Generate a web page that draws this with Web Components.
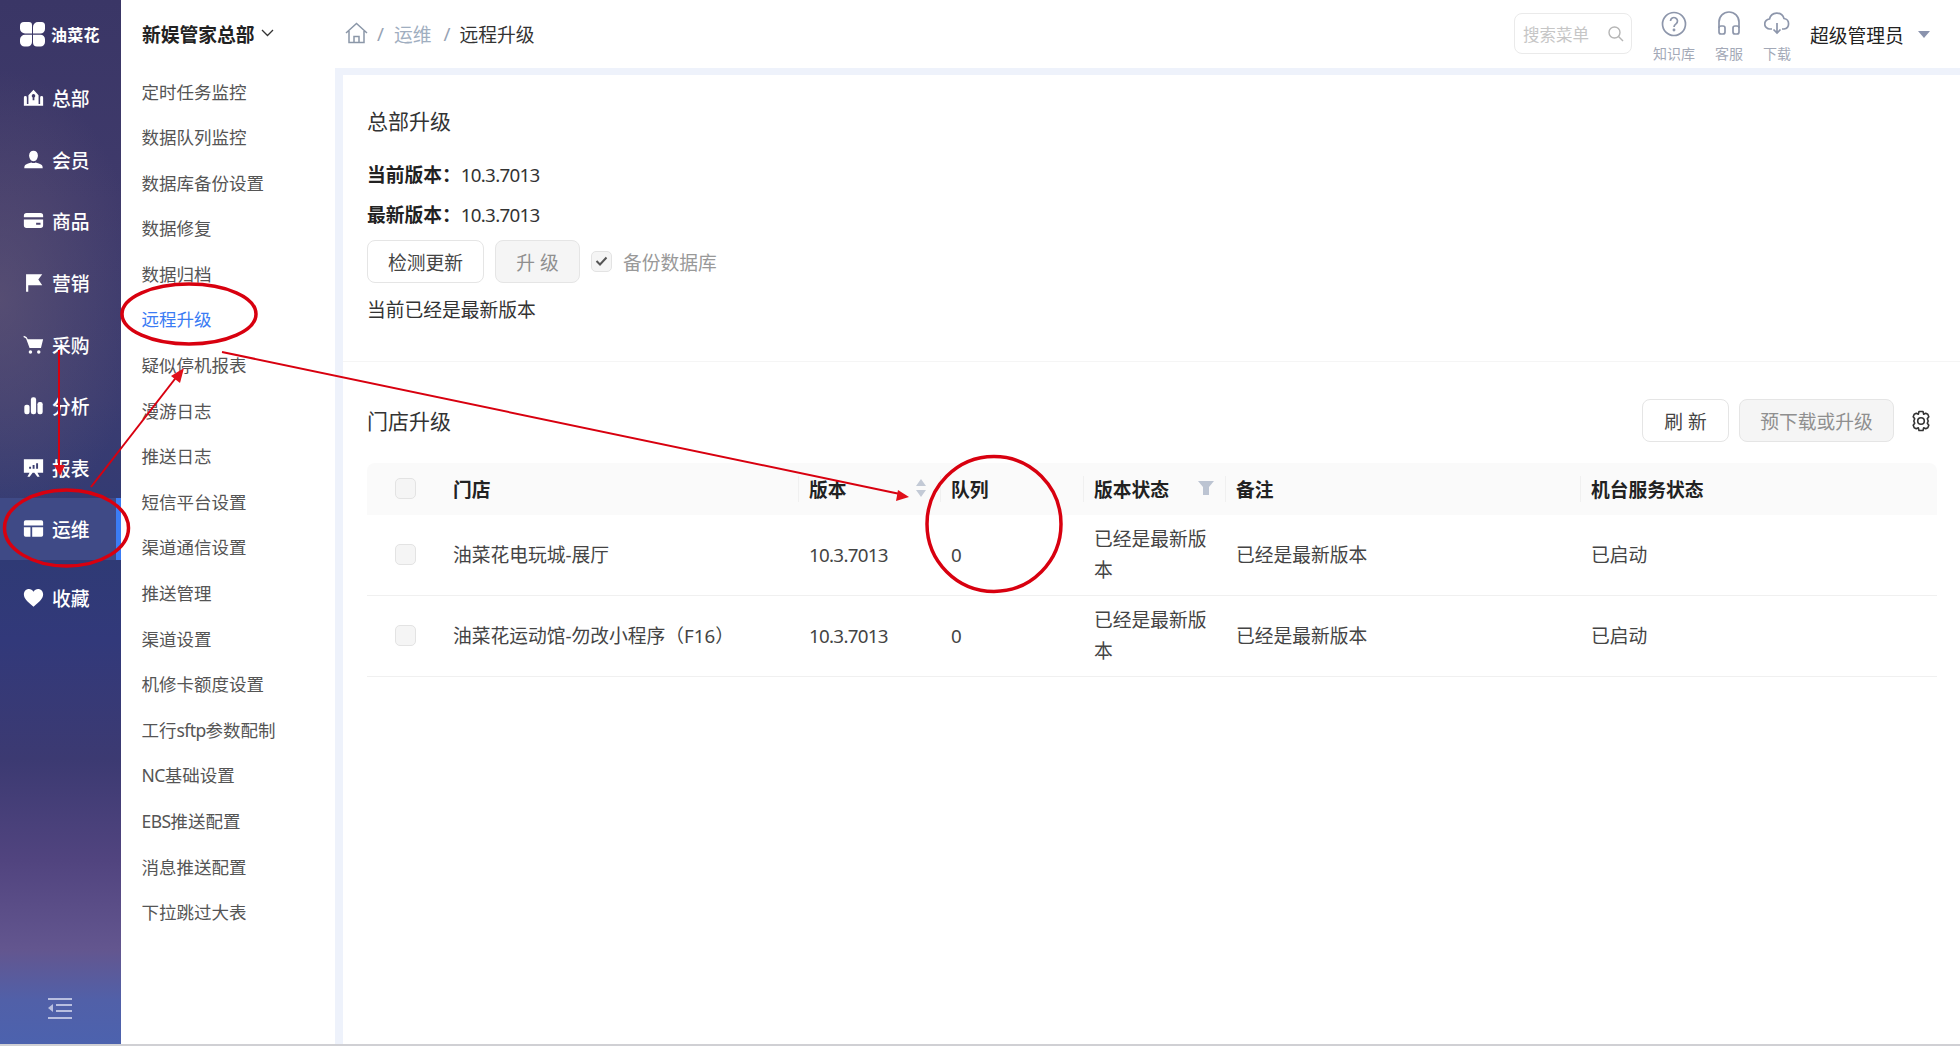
<!DOCTYPE html>
<html lang="zh">
<head>
<meta charset="utf-8">
<title>远程升级</title>
<style>
  html, body { margin: 0; height: 100%; }
  body {
    font-family: "Noto Sans", "Noto Sans CJK SC", sans-serif;
    color: #333;
    overflow: hidden;
  }
  app-shell { height: 1046px; }
</style>
</head>
<body>
<app-shell>
  <main-nav slot="nav"></main-nav>
  <sub-nav slot="sub"></sub-nav>
  <top-bar slot="top"></top-bar>
  <hq-upgrade slot="content"></hq-upgrade>
  <store-upgrade slot="content"></store-upgrade>
  <red-marks slot="marks"></red-marks>
</app-shell>

<script>
function tpl(html) {
  const t = document.createElement("template");
  t.innerHTML = html;
  return t;
}

class Base extends HTMLElement {
  constructor() {
    super();
    this.attachShadow({ mode: "open" });
    this.shadowRoot.appendChild(this.constructor.template.content.cloneNode(true));
  }
}

const NAV_ICONS = {
  总部: `<path fill-rule="evenodd" d="M1 21.500V12a1.700 1.700 0 0 1 3.400 0v7.500h1.800V9.500L12 3l5.800 6.500v10h1.800V12a1.700 1.700 0 0 1 3.400 0v9.500zM12 8a2 2 0 1 0 .01 0zM11 12v3h2v-3z"/>`,
  会员: `<path d="M12 2c3 0 5 2.200 5 5.500S15 14 12 14 7 10.800 7 7.500 9 2 12 2z"/><path d="M1.500 22c0-1.300.1-2.700 1-3.600C4 17 7.500 16 9.500 15.500c1.500.8 3.500.8 5 0 2 .5 5.500 1.500 7 2.900.9.900 1 2.300 1 3.600z"/>`,
  商品: `<path fill-rule="evenodd" d="M4 3.500h16a3 3 0 0 1 3 3v1.800H1V6.500a3 3 0 0 1 3-3zM1 10.800h22v6.700a3 3 0 0 1-3 3H4a3 3 0 0 1-3-3zM15 14.500v2.400h5v-2.400z"/>`,
  营销: `<path d="M3.500 2.500H22l-4.500 6 4.500 6.500H6v7.500H3.500z"/>`,
  采购: `<path d="M1 2l3 1.500L5.500 6H23l-2.500 10H7.500L3.500 5 .5 3.500z"/><circle cx="8.500" cy="20.500" r="2"/><circle cx="18" cy="20.500" r="2"/>`,
  分析: `<rect x="1.500" y="11" width="6" height="11" rx="2.500"/><rect x="9" y="2.500" width="6" height="19.500" rx="2.500"/><rect x="16.500" y="8" width="6" height="14" rx="2.500"/>`,
  报表: `<path fill-rule="evenodd" d="M1 2.500h22v15.500h-6.500l2.500 4.500h-2.600L13 18h-2l-3.400 4.500H5L7.500 18H1zM7 11v2.500h2.200V11zM11 9v4.500h2.200V9zM15 7v6.500h2.200V7z"/>`,
  运维: `<path d="M3 2.500h18A2 2 0 0 1 23 4.500V8.500H1V4.500A2 2 0 0 1 3 2.500zM1 10.500h7.500v11H3a2 2 0 0 1-2-2zM10.500 10.500H23v9a2 2 0 0 1-2 2H10.500z"/>`,
  收藏: `<path d="M12 22.500C4.500 16.500 1 13 1 8.300 1 4.800 3.600 2.300 6.800 2.300c2.100 0 4 1.100 5.200 3 1.200-1.900 3.100-3 5.200-3C20.400 2.300 23 4.800 23 8.300c0 4.700-3.500 8.200-11 14.200z"/>`
};

class MainNav extends Base {
  static template = tpl(`
  <style>
    :host {
      display: flex;
      flex-direction: column;
      width: 121px;
      height: 100%;
      color: #fff;
      background:
        radial-gradient(ellipse 140px 230px at 0 300px, rgba(110,95,120,.5), transparent),
        linear-gradient(180deg, #3a3666 0, #3f3a6b 200px, #3b3c70 400px, #2f3a75 560px, #32397a 640px,
          #3c3a72 760px, #51447f 860px, #63568f 950px, #5160a8 1000px, #4c62ae 1044px);
    }
    .logo { display: flex; align-items: center; height: 67px; box-sizing: border-box; padding-left: 20px; gap: 6px; flex: none; }
    .logo b { font-size: 16px; font-weight: 700; letter-spacing: .3px; white-space: nowrap; }
    .item {
      display: flex; align-items: center; height: 61.600px; box-sizing: border-box;
      padding-left: 23px; gap: 8px; font-size: 18.750px; font-weight: 500; flex: none;
    }
    .item svg { width: 21px; height: 21px; fill: #fff; flex: none; }
    .item.on { background: #3f4a86; border-right: 5px solid #3b7cf4; }
    .fav { margin-top: 7px; }
    .fold { margin-top: auto; margin-bottom: 25px; padding-left: 48px; height: 21px; }
    .fold svg { display: block; }
  </style>
  <div class="logo">
    <svg width="25" height="26" viewBox="0 0 25 26" fill="#fff">
      <path d="M4 1h5a3 3 0 0 1 3 3v8.500H5a5 5 0 0 1-5-5V5a4 4 0 0 1 4-4z"/>
      <path d="M18 1h3.500A3.500 3.500 0 0 1 25 4.500V8a4.500 4.500 0 0 1-4.500 4.500H13V6a5 5 0 0 1 5-5z"/>
      <path d="M5 13.800h7V21a4.500 4.500 0 0 1-4.500 4.500H4.500A4.500 4.500 0 0 1 0 21v-2.200a5 5 0 0 1 5-5z"/>
      <path d="M13 13.800h7.500a4.500 4.500 0 0 1 4.500 4.500v2.700a4.500 4.500 0 0 1-4.500 4.500H17a4 4 0 0 1-4-4z"/>
    </svg>
    <b>油菜花</b>
  </div>
  <nav id="list" style="display:contents"></nav>
  <div class="fold">
    <svg width="24" height="21" viewBox="0 0 24 21" fill="#b9bfe0">
      <rect width="24" height="2" y="0"/><rect x="8" y="6" width="16" height="2"/>
      <rect x="8" y="12" width="16" height="2"/><rect width="24" height="2" y="19"/>
      <path d="M5 6v8L0 10z"/>
    </svg>
  </div>`);
  connectedCallback() {
    const list = this.shadowRoot.getElementById("list");
    list.innerHTML = Object.keys(NAV_ICONS).map((k) => `
      <div class="item ${k === "运维" ? "on" : ""} ${k === "收藏" ? "fav" : ""}">
        <svg viewBox="0 0 24 24">${NAV_ICONS[k]}</svg><span>${k}</span>
      </div>`).join("");
  }
}

class SubNav extends Base {
  static template = tpl(`
  <style>
    :host { display: block; width: 214px; height: 100%; background: #fff; font-size: 17.500px; color: #555; box-sizing: border-box; padding: 0 0 0 21px; }
    .title { height: 68px; box-sizing: border-box; padding-bottom: 2px; display: flex; align-items: center; gap: 6px; font-size: 18.750px; font-weight: 700; color: #222; }
    #list { padding-top: 1.500px; }
    .row { height: 45.600px; line-height: 45.600px; white-space: nowrap; margin-left: -.5px; }
    .row.on { color: #3b7cf4; }
    i { font-style: normal; letter-spacing: -.6px; }
  </style>
  <div class="title">新娱管家总部
    <svg width="13" height="8" viewBox="0 0 13 8" fill="none" stroke="#333" stroke-width="1.300"><path d="M1 1l5.500 5.500L12 1"/></svg>
  </div>
  <div id="list"></div>`);
  connectedCallback() {
    const names = ["定时任务监控", "数据队列监控", "数据库备份设置", "数据修复", "数据归档", "远程升级", "疑似停机报表",
      "漫游日志", "推送日志", "短信平台设置", "渠道通信设置", "推送管理", "渠道设置", "机修卡额度设置",
      "工行<i>sftp</i>参数配制", "<i>NC</i>基础设置", "<i>EBS</i>推送配置", "消息推送配置", "下拉跳过大表"];
    this.shadowRoot.getElementById("list").innerHTML = names
      .map((n) => `<div class="row ${n === "远程升级" ? "on" : ""}">${n}</div>`).join("");
  }
}

class TopBar extends Base {
  static template = tpl(`
  <style>
    :host { display: flex; align-items: center; height: 68px; background: #fff; padding: 0 0 0 11px; box-sizing: border-box; }
    .crumb { display: flex; align-items: center; font-size: 18.750px; padding-bottom: 2px; margin-left: -1px; }
    .crumb .sep { color: #97a3b4; margin: 0 10px 0 9px; }
    .crumb .link { color: #a0aec0; }
    .crumb .now { color: #333; }
    .right { margin-left: auto; display: flex; align-items: flex-start; height: 100%; }
    .search {
      width: 118px; height: 41px; margin-top: 13px; box-sizing: border-box; border: 1px solid #eaeaea; border-radius: 8px;
      display: flex; align-items: center; justify-content: space-between; padding: 0 7px 0 8px; font-size: 16.500px; color: #c6c6c6;
    }
    .tool { display: flex; flex-direction: column; align-items: center; width: 50px; font-size: 14px; color: #a3a9b7; padding-top: 11px; }
    .tool svg { display: block; height: 26px; }
    .tool span { margin-top: 7px; line-height: 19px; white-space: nowrap; }
    .tools { display: flex; margin-left: 17px; }
    .tools .t2 { margin-left: 5px; }
    .tools .t3 { margin-left: -2px; }
    .user { display: flex; align-items: center; gap: 14px; font-size: 18.750px; color: #222; height: 68px; margin-left: 8px; width: 150px; }
  </style>
  <div class="crumb">
    <svg width="23" height="22" viewBox="0 0 23 22" fill="none" stroke="#8b97a8" stroke-width="1.500"><path d="M1 11L11.500 1.500 22 11M4 9v11.500h15V9M9 20.500v-6h5v6"/></svg>
    <span class="sep">/</span><span class="link">运维</span><span class="sep" style="margin:0 9px 0 12px">/</span><span class="now">远程升级</span>
  </div>
  <div class="right">
    <div class="search">搜索菜单
      <svg width="16" height="16" viewBox="0 0 16 16" fill="none" stroke="#b5b5b5" stroke-width="1.400"><circle cx="6.500" cy="6.500" r="5.500"/><path d="M10.500 10.500l4.500 4.500"/></svg>
    </div>
    <div class="tools">
      <div class="tool">
        <svg width="26" height="26" viewBox="0 0 26 26" fill="none" stroke="#8d96ab" stroke-width="1.700"><circle cx="13" cy="13" r="11.500"/><path d="M9.500 10a3.500 3.500 0 1 1 5.500 2.900c-1.300.9-2 1.500-2 3"/><circle cx="13" cy="19" r=".6" fill="#8d96ab"/></svg>
        <span>知识库</span>
      </div>
      <div class="tool t2">
        <svg width="24" height="26" viewBox="0 0 24 26" fill="none" stroke="#8d96ab" stroke-width="1.700"><path d="M2 17v-6a10 10 0 0 1 20 0v6"/><rect x="2" y="15" width="6" height="8" rx="2"/><rect x="16" y="15" width="6" height="8" rx="2"/></svg>
        <span>客服</span>
      </div>
      <div class="tool t3">
        <svg width="26" height="26" viewBox="0 0 26 26" fill="none" stroke="#8d96ab" stroke-width="1.700"><path d="M8 18H6a5 5 0 0 1-.5-10A7.500 7.500 0 0 1 20 7.500 5.300 5.300 0 0 1 20 18h-2"/><path d="M13 12v10M9.500 18.500L13 22l3.500-3.500"/></svg>
        <span>下载</span>
      </div>
    </div>
    <div class="user">超级管理员
      <svg width="12" height="7" viewBox="0 0 12 7" fill="#8a93ad"><path d="M0 0h12L6 7z"/></svg>
    </div>
  </div>`);
}

class UiButton extends Base {
  static template = tpl(`
  <style>
    :host {
      display: inline-flex; align-items: center; justify-content: center; box-sizing: border-box;
      height: 43px; border: 1px solid #e5e5e5; border-radius: 8px; background: #fff; color: #444;
      font-size: 18.750px; white-space: nowrap; flex: none;
    }
    :host([off]) { background: #f5f5f5; color: #8f8f8f; }
  </style>
  <slot></slot>`);
}

class UiCheck extends Base {
  static template = tpl(`
  <style>
    :host {
      display: inline-flex; align-items: center; justify-content: center; box-sizing: border-box;
      width: 21px; height: 21px; border: 1px solid #e3e3e3; border-radius: 5px; background: #f5f5f5; flex: none;
    }
    svg { display: none; }
    :host([checked]) svg { display: block; }
  </style>
  <svg width="13" height="10" viewBox="0 0 13 10" fill="none" stroke="#555" stroke-width="2"><path d="M1.500 5l3.500 3.500 6.500-7"/></svg>`);
}

class HqUpgrade extends Base {
  static template = tpl(`
  <style>
    :host { display: block; height: 287px; box-sizing: border-box; padding: 0 24px; border-bottom: 1px solid #f5f5f5; font-size: 18.750px; color: #333; }
    h2 { margin: 0; padding-top: 29px; height: 34px; line-height: 34px; font-size: 21px; font-weight: 400; }
    .ver { height: 40.500px; line-height: 40.500px; }
    .ver b { font-weight: 700; color: #222; }
    .ver i { font-style: normal; letter-spacing: -.7px; }
    .info { padding-top: 16.500px; }
    .acts { display: flex; align-items: center; height: 43px; margin-top: 4px; }
    .chk { margin-left: 11px; margin-right: 11px; }
    .lbl { color: #999; }
    .msg { margin-top: 10.500px; line-height: 34px; }
  </style>
  <h2>总部升级</h2>
  <div class="info">
    <div class="ver"><b>当前版本：</b><i>10.3.7013</i></div>
    <div class="ver"><b>最新版本：</b><i>10.3.7013</i></div>
  </div>
  <div class="acts">
    <ui-button style="width:117px">检测更新</ui-button>
    <ui-button off style="width:85px;margin-left:11px">升 级</ui-button>
    <ui-check checked class="chk"></ui-check>
    <span class="lbl">备份数据库</span>
  </div>
  <div class="msg">当前已经是最新版本</div>`);
}

class StoreUpgrade extends Base {
  static template = tpl(`
  <style>
    :host { display: block; padding: 36px 23px 0 24px; font-size: 18.750px; color: #444; }
    .bar { display: flex; align-items: center; height: 45px; }
    h2 { margin: 0 0 2px; font-size: 21px; font-weight: 400; color: #333; }
    .bar .gap { margin-left: auto; }
    .gear { margin-left: 17px; display: block; }
    .bar .b2 { margin-left: 10px; }
    .bar svg { margin-right: 6px; }
    .grid { display: grid; grid-template-columns: 75px 356px 142px 143px 142px 355px 357px; margin-top: 20px; }
    .th, .td { display: flex; align-items: center; padding: 0 11px 2px; box-sizing: border-box; }
    .th { height: 52px; background: #fafafa; font-weight: 700; color: #222; position: relative; }
    .th.sep::before { content: ""; position: absolute; left: 0; top: 13px; bottom: 13px; width: 1px; background: #f0f0f0; }
    .th:first-child { border-top-left-radius: 8px; }
    .th:nth-child(7) { border-top-right-radius: 8px; }
    .td { height: 81px; border-bottom: 1px solid #f0f0f0; line-height: 31px; }
    .c0 { padding-left: 28px; }
    .between { justify-content: space-between; }
    .num { letter-spacing: -.7px; }
  </style>
  <div class="bar">
    <h2>门店升级</h2>
    <ui-button class="gap" style="width:87px">刷 新</ui-button>
    <ui-button off class="b2" style="width:155px">预下载或升级</ui-button>
    <svg class="gear" width="20" height="22" viewBox="0 0 20 22" fill="none" stroke="#333" stroke-width="1.600"><path stroke-linejoin="round" d="M8 1.500h4l.7 2.700 2-.9 2.100.9 1 2.500-1.500 2.100.9 2.200-.9 2.200 1.500 2.100-1 2.500-2.100.9-2-.9-.7 2.700H8l-.7-2.700-2 .9-2.100-.9-1-2.500 1.500-2.100-.9-2.200.9-2.200-1.500-2.100 1-2.500 2.100-.9 2 .9z"/><circle cx="10" cy="11" r="3.300"/></svg>
  </div>
  <div class="grid" id="grid"></div>`);
  connectedCallback() {
    const sort = `<svg width="12" height="20" viewBox="0 0 12 20" fill="#c3cad6"><path d="M6 1l5 7H1zM6 19l5-7H1z"/></svg>`;
    const filter = `<svg width="16" height="16" viewBox="0 0 16 16" fill="#bcc4d2"><path d="M0 1h16l-5 6v8H5V7z"/></svg>`;
    const head = `
      <div class="th c0"><ui-check></ui-check></div>
      <div class="th">门店</div>
      <div class="th sep between" style="padding-right:13px">版本${sort}</div>
      <div class="th sep">队列</div>
      <div class="th sep between">版本状态${filter}</div>
      <div class="th sep">备注</div>
      <div class="th sep">机台服务状态</div>`;
    const rows = ["油菜花电玩城-展厅", "油菜花运动馆-勿改小程序（F16）"].map((name) => `
      <div class="td c0"><ui-check></ui-check></div>
      <div class="td">${name}</div>
      <div class="td num">10.3.7013</div>
      <div class="td">0</div>
      <div class="td">已经是最新版本</div>
      <div class="td">已经是最新版本</div>
      <div class="td">已启动</div>`).join("");
    this.shadowRoot.getElementById("grid").innerHTML = head + rows;
  }
}

// hand drawn red annotations lying over the screenshot
class RedMarks extends Base {
  static template = tpl(`
  <style>
    :host { position: absolute; inset: 0; pointer-events: none; display: block; }
    svg { display: block; }
  </style>
  <svg width="1960" height="1046" viewBox="0 0 1960 1046" fill="none" stroke="#d8000f">
    <ellipse cx="189" cy="314" rx="67" ry="30" stroke-width="3.500"/>
    <ellipse cx="66.500" cy="528" rx="62" ry="38" stroke-width="3.500"/>
    <ellipse cx="994" cy="524" rx="67" ry="67.500" stroke-width="3.500"/>
    <g stroke-width="2">
      <path d="M59 350V468"/>
      <path d="M91 487L178 375"/>
      <path d="M222 352L900 494"/>
    </g>
    <g fill="#e0101a" stroke="none">
      <path d="M60 476l-6-11h11z"/>
      <path d="M184 368l-13 8 9 7z"/>
      <path d="M909 497l-11-7-2 11z"/>
    </g>
  </svg>`);
}

class AppShell extends Base {
  static template = tpl(`
  <style>
    :host { display: grid; grid-template-columns: 121px 214px 1fr; grid-template-rows: 68px 1fr 2px; position: relative; width: 1960px; background: #eef2fb; overflow: hidden; }
    .nav { grid-column: 1; grid-row: 1 / 3; }
    .sub { grid-column: 2; grid-row: 1 / 3; }
    .top { grid-column: 3; grid-row: 1; }
    .main { grid-column: 3; grid-row: 2; padding: 7px 0 0 8px; min-height: 0; }
    .card { background: #fff; height: 100%; }
    .foot { grid-column: 1 / 4; grid-row: 3; background: #d0d0d4; }
  </style>
  <div class="nav"><slot name="nav"></slot></div>
  <div class="sub"><slot name="sub"></slot></div>
  <div class="top"><slot name="top"></slot></div>
  <div class="main"><div class="card"><slot name="content"></slot></div></div>
  <div class="foot"></div>
  <slot name="marks"></slot>`);
}

customElements.define("ui-button", UiButton);
customElements.define("ui-check", UiCheck);
customElements.define("main-nav", MainNav);
customElements.define("sub-nav", SubNav);
customElements.define("top-bar", TopBar);
customElements.define("hq-upgrade", HqUpgrade);
customElements.define("store-upgrade", StoreUpgrade);
customElements.define("red-marks", RedMarks);
customElements.define("app-shell", AppShell);
</script>
</body>
</html>
